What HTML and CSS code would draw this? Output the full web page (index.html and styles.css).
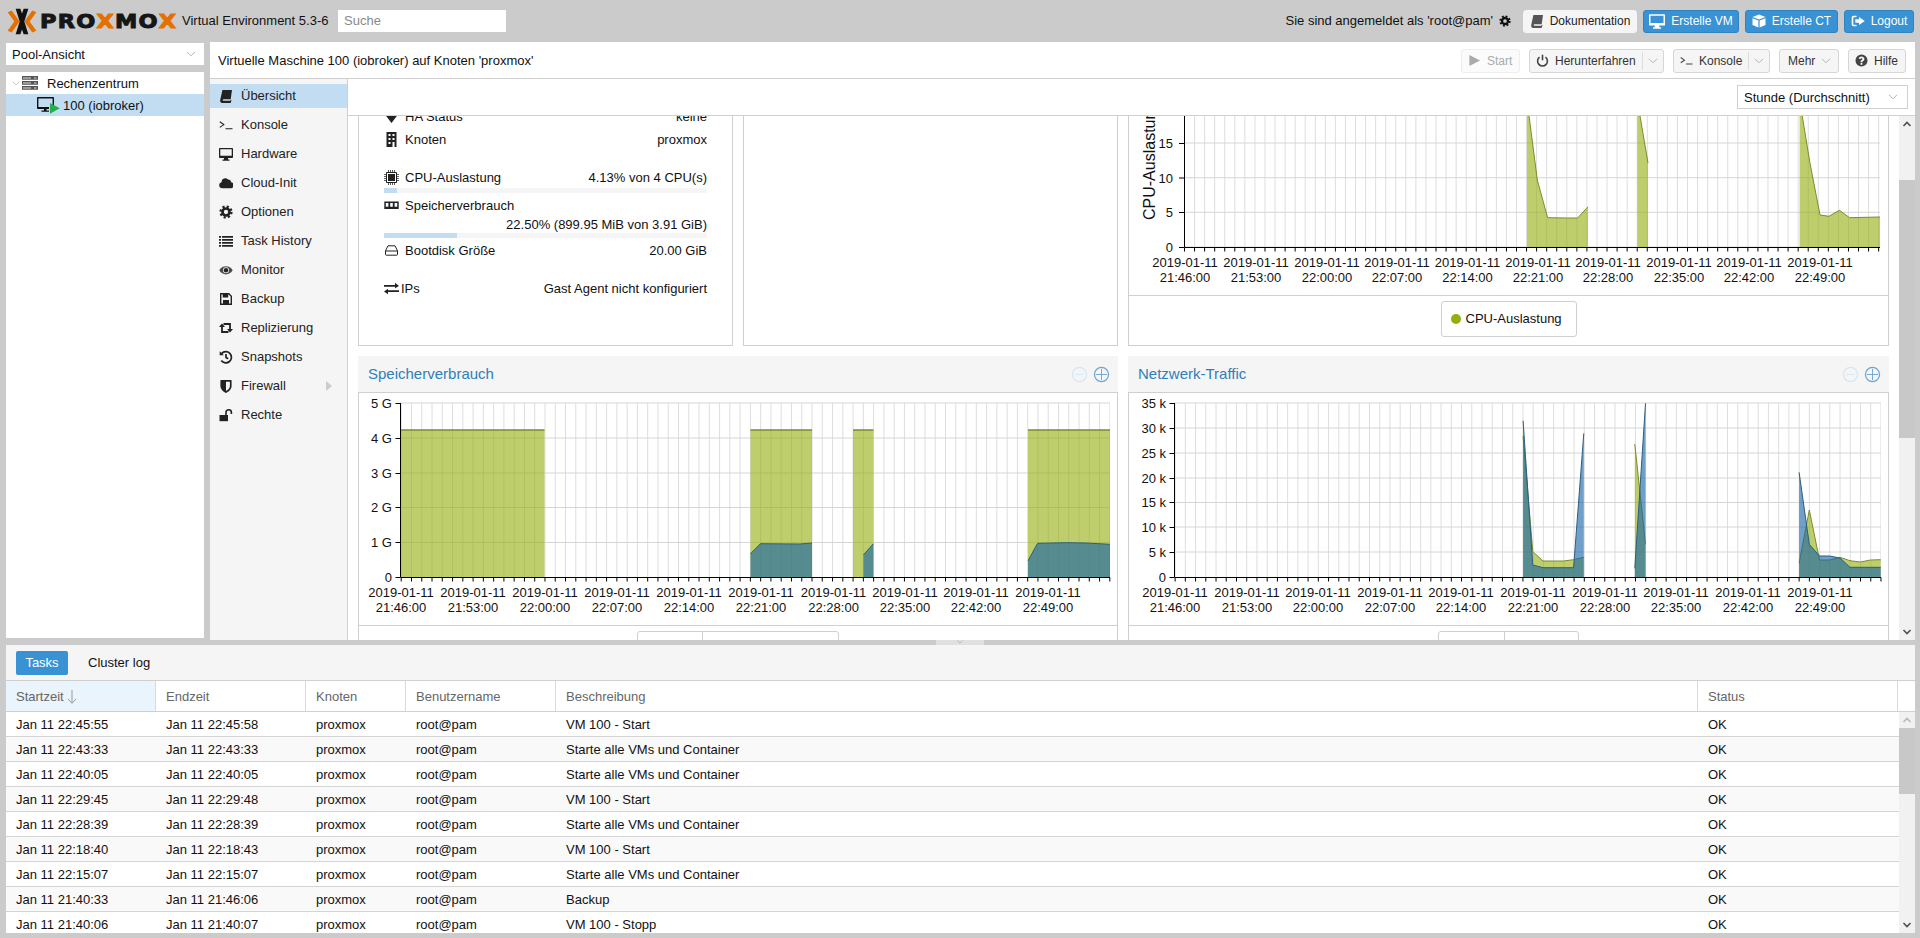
FILE: index.html
```html
<!DOCTYPE html>
<html lang="de">
<head>
<meta charset="utf-8">
<title>proxmox - Proxmox Virtual Environment</title>
<link rel="stylesheet" href="styles.css">
</head>
<body>
<svg class="sprite" aria-hidden="true">
  <symbol id="i-book" viewBox="0 0 14 14"><path fill="currentColor" d="M3.4 1H13l-1.3 9.3H4.6c-1.2 0-1.3 1.4 0 1.4h6.8l.5-1 .6.2-.8 3.1H3.2C1.6 14 .9 12.6 1.2 11L3.4 1Z"/></symbol>
  <symbol id="i-console" viewBox="0 0 14 14"><path fill="none" stroke="currentColor" stroke-width="1.1" d="M.8 3.8 4.8 6.6.8 9.4M6.5 10.8h7"/></symbol>
  <symbol id="i-desktop" viewBox="0 0 14 14"><path fill="currentColor" fill-rule="evenodd" d="M.8 1h12.4c.4 0 .8.4.8.8v8.4c0 .5-.4.8-.8.8H9v1.5h1.5V13.8h-7v-1.3H5V11H.8C.4 11 0 10.700 0 10.200V1.800C0 1.400.4 1 .8 1ZM1.300 2.300V8.700H12.700V2.300Z"/></symbol>
  <symbol id="i-cloud" viewBox="0 0 14 14"><path fill="currentColor" d="M3.300 12.300a3.100 3.100 0 0 1-.8-6.100 3.700 3.700 0 0 1 6.500-2.600 2.600 2.600 0 0 1 3 2.700 3 3 0 0 1-.9 6Z"/></symbol>
  <symbol id="i-gear" viewBox="0 0 14 14"><g fill="none" stroke="currentColor"><circle cx="7" cy="7" r="3.500" stroke-width="2.700"/><circle cx="7" cy="7" r="5.500" stroke-width="2.200" stroke-dasharray="2.200 2.120"/></g></symbol>
  <symbol id="i-list" viewBox="0 0 14 14"><path fill="currentColor" d="M0 2h2v1.700H0ZM3 2h11v1.700H3ZM0 5h2v1.700H0ZM3 5h11v1.700H3ZM0 8h2v1.700H0ZM3 8h11v1.700H3ZM0 11h2v1.700H0ZM3 11h11v1.700H3Z"/></symbol>
  <symbol id="i-eye" viewBox="0 0 14 14"><path fill="currentColor" fill-rule="evenodd" opacity=".8" d="M.3 7.300C3 1.800 11 1.800 13.700 7.300 11 12.800 3 12.800.3 7.300ZM7 4.300A3 3 0 1 0 7 10.300 3 3 0 0 0 7 4.300Z"/><circle cx="7" cy="7.300" r="2.200" fill="currentColor"/></symbol>
  <symbol id="i-floppy" viewBox="0 0 14 14"><path fill="none" stroke="currentColor" stroke-width="1.400" d="M1.700 1.700h8.100l2.500 2.500v8.100H1.700Z"/><path fill="currentColor" d="M3.700 2h5.500v3.500H3.700ZM4 8h6v4.500H4Z"/></symbol>
  <symbol id="i-retweet" viewBox="0 0 14 14"><path fill="none" stroke="currentColor" stroke-width="1.800" d="M3 5.500V11h6.500M11 8.500V3H4.500"/><path fill="currentColor" d="M0 6 3 2.500 6 6ZM8 8l3 3.500L14 8Z"/></symbol>
  <symbol id="i-history" viewBox="0 0 14 14"><path fill="none" stroke="currentColor" stroke-width="1.700" d="M2.600 3.600A5.600 5.600 0 1 1 2.300 10.500M7 4v3.400l2.200 1.300"/><path fill="currentColor" d="M.7 1.300 4.800 5.200H.7Z"/></symbol>
  <symbol id="i-shield" viewBox="0 0 14 14"><path fill="currentColor" fill-rule="evenodd" d="M2 1h10c.3 0 .6.300.6.600V7c0 3.300-2.900 5.800-5.600 7C4.300 12.800 1.400 10.300 1.400 7V1.600C1.400 1.300 1.700 1 2 1ZM7 2.800V12c2-1 3.900-2.800 3.900-5V2.800Z"/></symbol>
  <symbol id="i-unlock" viewBox="0 0 14 14"><path fill="currentColor" d="M.5 7h8.500v6.200H.5Z"/><path fill="none" stroke="currentColor" stroke-width="1.600" d="M7 7.500V4.500a2.700 2.700 0 0 1 5.400 0V6"/></symbol>
  <symbol id="i-cube" viewBox="0 0 14 14"><path fill="currentColor" d="M7 .5 13.500 3 7 5.600.5 3ZM.5 4.200 6.400 6.600v7L.5 11ZM7.600 6.600 13.500 4.200V11L7.600 13.600Z"/></symbol>
  <symbol id="i-signout" viewBox="0 0 14 14"><path fill="none" stroke="currentColor" stroke-width="1.600" d="M5.500 2.500H2.500c-.6 0-1 .4-1 1v7c0 .6.400 1 1 1h3"/><path fill="currentColor" d="M8 3l5.800 4L8 11V8.700H4.300V5.300H8Z"/></symbol>
  <symbol id="i-power" viewBox="0 0 14 14"><path fill="none" stroke="currentColor" stroke-width="1.700" d="M3.800 3.400a5.300 5.300 0 1 0 6.400 0M7 .8v6"/></symbol>
  <symbol id="i-help" viewBox="0 0 14 14"><path fill="currentColor" fill-rule="evenodd" d="M7 .5a6.500 6.500 0 1 1 0 13 6.500 6.500 0 0 1 0-13ZM6 9.800v1.800h2V9.800ZM7 2.800c-1.700 0-2.800.9-3 2.400l1.800.3c.1-.6.500-1 1.100-1 .6 0 1.100.3 1.100.9 0 .5-.4.800-.9 1.100-.9.600-1.100 1.100-1.100 2.400h2c0-.7.200-.9.800-1.300.8-.5 1.300-1.200 1.300-2.200 0-1.600-1.400-2.600-3.100-2.600Z"/></symbol>
  <symbol id="i-play" viewBox="0 0 14 14"><path fill="currentColor" d="M1.500 1 13 7 1.500 13Z"/></symbol>
  <symbol id="i-chev" viewBox="0 0 10 6"><path fill="none" stroke="currentColor" stroke-width="1" d="M1 .8 5 4.800 9 .8"/></symbol>
  <symbol id="i-chevup" viewBox="0 0 10 6"><path fill="none" stroke="currentColor" stroke-width="1.600" d="M1.500 5 5 1.500 8.500 5"/></symbol>
  <symbol id="i-chevdn" viewBox="0 0 10 6"><path fill="none" stroke="currentColor" stroke-width="1.600" d="M1.500 1 5 4.500 8.500 1"/></symbol>
  <symbol id="i-sort" viewBox="0 0 10 14"><path fill="none" stroke="currentColor" stroke-width="1" d="M5 0v13M1 9l4 4.300L9 9"/></symbol>
  <symbol id="i-server" viewBox="0 0 16 14"><path fill="#555" d="M0 0h16v3.800H0ZM0 5h16v3.800H0ZM0 10h16v3.800H0Z"/><path fill="#ddd" d="M1 1.400h8v1H1ZM1 6.400h8v1H1ZM1 11.400h8v1H1ZM12 1.400h2.500v1H12ZM12 6.400h2.500v1H12ZM12 11.400h2.500v1H12Z"/></symbol>
  <symbol id="i-vm" viewBox="0 0 23 17"><path fill="#111" fill-rule="evenodd" d="M.8 0h15.400c.4 0 .8.400.8.800V9h-1.400V1.400H1.400v8.600H12v2H9.500v1.500h2.500v1.300H4.500v-1.300H7V12H.8c-.4 0-.8-.4-.8-.8V.8C0 .4.400 0 .8 0Z"/><path fill="#22b04c" d="M13 6l9.800 5.300L13 16.800Z"/></symbol>
  <symbol id="i-cpu" viewBox="0 0 15 15"><path fill="none" stroke="currentColor" stroke-width="1" d="M2.500 2.500h10v10h-10Z"/><path fill="currentColor" d="M4 4h7v7H4Z"/><path fill="none" stroke="currentColor" stroke-width="1.400" stroke-dasharray="1 1" d="M4 1h7M4 14h7M1 4v7M14 4v7"/></symbol>
  <symbol id="i-mem" viewBox="0 0 15 15"><path fill="currentColor" fill-rule="evenodd" d="M.3 3.500h14.400v7.500H.3ZM1.800 5v3.800h2.600V5ZM6.200 5v3.800h2.600V5ZM10.600 5v3.800h2.600V5Z"/></symbol>
  <symbol id="i-hdd" viewBox="0 0 15 15"><path fill="none" stroke="currentColor" stroke-width="1" d="M4 2.800h7l2.500 5v3.700c0 .4-.3.700-.7.700H2.200c-.4 0-.7-.3-.7-.7V7.800ZM1.500 8h12"/></symbol>
  <symbol id="i-exch" viewBox="0 0 15 15"><path fill="currentColor" d="M0 4h11V1.800L15 5 11 7.200V5.800H0ZM15 9.200H4V7.800L0 10.500 4 13.200V11h11Z"/></symbol>
  <symbol id="i-bldg" viewBox="0 0 15 15"><path fill="currentColor" fill-rule="evenodd" d="M2.500 0h10v15h-10ZM4.500 2v2h2V2ZM8.500 2v2h2V2ZM4.500 6v2h2V6ZM8.500 6v2h2V6ZM4.500 10v2h2v-2ZM8.500 10v5h2V10Z"/></symbol>
  <symbol id="i-ha" viewBox="0 0 15 15"><path fill="currentColor" d="M1 5.500 7.500 14 14 5.500ZM7.500 .5 1 5h13Z"/></symbol>
  <symbol id="i-minus" viewBox="0 0 18 18"><circle cx="9" cy="9" r="7.500" fill="none" stroke="#d5e6f3" stroke-width="1.300"/><path stroke="#d5e6f3" d="M5 9h8"/></symbol>
  <symbol id="i-plus" viewBox="0 0 18 18"><circle cx="9" cy="9" r="7.500" fill="none" stroke="#6ea6d0" stroke-width="1.300"/><path stroke="#6ea6d0" d="M9 3v12M3 9h12"/></symbol>
</svg>

<div class="app">
  <header class="topbar">
    <div class="logo">
      <svg class="logo-x" viewBox="18 22 90 80" aria-hidden="true">
        <path fill="#111" d="M44 24H58L63 38 68 24H82L70 62 82 100H68L63 86 58 100H44L56 62Z"/>
        <path fill="#e57000" d="M20 34 32 29 56 62 32 95 20 90 40 62ZM106 34 94 29 70 62 94 95 106 90 86 62Z"/>
      </svg>
      <span class="logo-text">PRO<b>X</b>MO<b>X</b></span>
    </div>
    <span class="version">Virtual Environment 5.3-6</span>
    <div class="search">Suche</div>
    <div class="top-right">
      <span class="login">Sie sind angemeldet als 'root@pam'</span>
      <svg class="ico gear-top"><use href="#i-gear"/></svg>
      <div class="tbtn tbtn-doc"><svg class="ico"><use href="#i-book"/></svg>Dokumentation</div>
      <div class="tbtn tbtn-vm"><svg class="ico ico-lg"><use href="#i-desktop"/></svg>Erstelle VM</div>
      <div class="tbtn tbtn-ct"><svg class="ico"><use href="#i-cube"/></svg>Erstelle CT</div>
      <div class="tbtn tbtn-out"><svg class="ico"><use href="#i-signout"/></svg>Logout</div>
    </div>
  </header>

  <div class="workspace">
    <aside class="resources">
      <div class="field pool"><span>Pool-Ansicht</span><svg class="chev"><use href="#i-chev"/></svg></div>
      <div class="tree">
        <div class="tree-row"><svg class="chev tree-chev"><use href="#i-chev"/></svg><svg class="tree-server"><use href="#i-server"/></svg><span>Rechenzentrum</span></div>
        <div class="tree-row tree-sel"><svg class="tree-vm"><use href="#i-vm"/></svg><span>100 (iobroker)</span></div>
      </div>
    </aside>

    <section class="center">
      <div class="center-head">
        <span class="center-title">Virtuelle Maschine 100 (iobroker) auf Knoten 'proxmox'</span>
        <div class="actions">
          <div class="btn btn-off btn-start"><svg class="ico"><use href="#i-play"/></svg>Start</div>
          <div class="btn btn-down"><svg class="ico"><use href="#i-power"/></svg><span class="btn-label">Herunterfahren</span><span class="split"><svg class="chev"><use href="#i-chev"/></svg></span></div>
          <div class="btn btn-kons"><svg class="ico"><use href="#i-console"/></svg><span class="btn-label">Konsole</span><span class="split"><svg class="chev"><use href="#i-chev"/></svg></span></div>
          <div class="btn btn-more">Mehr<svg class="chev"><use href="#i-chev"/></svg></div>
          <div class="btn btn-help"><svg class="ico"><use href="#i-help"/></svg>Hilfe</div>
        </div>
      </div>
      <div class="center-main">
        <nav class="sidenav">
          <div class="nav-item nav-sel"><svg class="ico"><use href="#i-book"/></svg>Übersicht</div>
          <div class="nav-item"><svg class="ico"><use href="#i-console"/></svg>Konsole</div>
          <div class="nav-item"><svg class="ico"><use href="#i-desktop"/></svg>Hardware</div>
          <div class="nav-item"><svg class="ico"><use href="#i-cloud"/></svg>Cloud-Init</div>
          <div class="nav-item"><svg class="ico"><use href="#i-gear"/></svg>Optionen</div>
          <div class="nav-item"><svg class="ico"><use href="#i-list"/></svg>Task History</div>
          <div class="nav-item"><svg class="ico"><use href="#i-eye"/></svg>Monitor</div>
          <div class="nav-item"><svg class="ico"><use href="#i-floppy"/></svg>Backup</div>
          <div class="nav-item"><svg class="ico"><use href="#i-retweet"/></svg>Replizierung</div>
          <div class="nav-item"><svg class="ico"><use href="#i-history"/></svg>Snapshots</div>
          <div class="nav-item"><svg class="ico"><use href="#i-shield"/></svg>Firewall<span class="nav-arrow"></span></div>
          <div class="nav-item"><svg class="ico"><use href="#i-unlock"/></svg>Rechte</div>
        </nav>
        <div class="detail">
          <div class="detail-bar">
            <div class="field timeframe"><span>Stunde (Durchschnitt)</span><svg class="chev"><use href="#i-chev"/></svg></div>
          </div>
          <div class="detail-body">
            <div class="pane">
              <div class="dash">
                <div class="card status">
                  <div class="stat stat-first stat-low"><span class="stat-key"><svg class="ico stat-ico"><use href="#i-ha"/></svg>HA Status</span><span>keine</span></div>
                  <div class="stat stat-low"><span class="stat-key"><svg class="ico stat-ico"><use href="#i-bldg"/></svg>Knoten</span><span>proxmox</span></div>
                  <div class="stat stat-cpu stat-low"><span class="stat-key"><svg class="ico stat-ico"><use href="#i-cpu"/></svg>CPU-Auslastung</span><span>4.13% von 4 CPU(s)</span></div>
                  <div class="bar"><div class="bar-fill" style="width:4.13%"></div></div>
                  <div class="stat stat-mem"><span class="stat-key"><svg class="ico stat-ico"><use href="#i-mem"/></svg>Speicherverbrauch</span></div>
                  <div class="stat stat-memval">22.50% (899.95 MiB von 3.91 GiB)</div>
                  <div class="bar"><div class="bar-fill" style="width:22.5%"></div></div>
                  <div class="stat stat-boot"><span class="stat-key"><svg class="ico stat-ico"><use href="#i-hdd"/></svg>Bootdisk Größe</span><span>20.00 GiB</span></div>
                  <div class="stat stat-ip"><span class="stat-key stat-key-ip"><svg class="ico stat-ico"><use href="#i-exch"/></svg>IPs</span><span>Gast Agent nicht konfiguriert</span></div>
                </div>
                <div class="card"></div>
                <div class="card chart-card">
                  <div class="chart-head"><span class="chart-title">CPU-Auslastung</span><svg class="tool"><use href="#i-minus"/></svg><svg class="tool"><use href="#i-plus"/></svg></div>
                  <svg class="chart" viewBox="1129 63 759 232">
                    <line class="grid-v" x1="1184" y1="100" x2="1880" y2="100" stroke-width="294" stroke-dasharray="1 9.060"/>
                    <path class="grid-h" d="M1184 247H1880M1184 212.300H1880M1184 177.700H1880M1184 143H1880M1184 108.300H1880"/>
                    <path class="s-green" d="M1527 247V100L1537.300 180 1547.600 217.700 1567.400 218 1577.600 218 1588 206.700V247ZM1637.300 247V100L1648 163V247ZM1799.600 247V100L1810 163.300 1820 215 1829 216.300 1839.400 210.300 1849.600 217.700 1880 217V247Z"/>
                    <path class="l-green" d="M1527 100 1537.300 180 1547.600 217.700 1567.400 218 1577.600 218 1588 206.700M1637.300 100 1648 163M1799.600 100 1810 163.300 1820 215 1829 216.300 1839.400 210.300 1849.600 217.700 1880 217"/>
                    <path class="axis" d="M1184.500 90V247.500H1880M1179 247.500H1184M1179 212.500H1184M1179 178H1184M1179 143.500H1184"/>
                    <line class="axis" x1="1184" y1="249.500" x2="1881" y2="249.500" stroke-width="4" stroke-dasharray="1 9.060"/>
                    <text class="ylab" x="1173" y="252">0</text><text class="ylab" x="1173" y="217">5</text><text class="ylab" x="1173" y="183">10</text><text class="ylab" x="1173" y="148">15</text>
                    <text class="ytitle" transform="translate(1155 220) rotate(-90)">CPU-Auslastung</text>
                    <g class="xlab">
                      <text x="1185" y="267">2019-01-11<tspan x="1185" y="282">21:46:00</tspan></text>
                      <text x="1256" y="267">2019-01-11<tspan x="1256" y="282">21:53:00</tspan></text>
                      <text x="1327" y="267">2019-01-11<tspan x="1327" y="282">22:00:00</tspan></text>
                      <text x="1397" y="267">2019-01-11<tspan x="1397" y="282">22:07:00</tspan></text>
                      <text x="1467.500" y="267">2019-01-11<tspan x="1467.500" y="282">22:14:00</tspan></text>
                      <text x="1538" y="267">2019-01-11<tspan x="1538" y="282">22:21:00</tspan></text>
                      <text x="1608" y="267">2019-01-11<tspan x="1608" y="282">22:28:00</tspan></text>
                      <text x="1679" y="267">2019-01-11<tspan x="1679" y="282">22:35:00</tspan></text>
                      <text x="1749" y="267">2019-01-11<tspan x="1749" y="282">22:42:00</tspan></text>
                      <text x="1820" y="267">2019-01-11<tspan x="1820" y="282">22:49:00</tspan></text>
                    </g>
                  </svg>
                  <div class="legend-row"><div class="legend"><div class="legend-item"><span class="dot"></span>CPU-Auslastung</div></div></div>
                </div>

                <div class="card chart-card wide-a">
                  <div class="chart-head"><span class="chart-title">Speicherverbrauch</span><svg class="tool"><use href="#i-minus"/></svg><svg class="tool"><use href="#i-plus"/></svg></div>
                  <svg class="chart chart-a" viewBox="359 393 758 232">
                    <line class="grid-v" x1="400.700" y1="490" x2="1110" y2="490" stroke-width="174" stroke-dasharray="1 9.270"/>
                    <path class="grid-h" d="M400 403H1110M400 438H1110M400 473H1110M400 507.500H1110M400 542.500H1110"/>
                    <path class="s-green" d="M400.700 577V430H544.500V577ZM750.500 577V430H812V577ZM853 577V430H873.400V577ZM1028 577V430H1110V577Z"/>
                    <path class="l-green l-thick" d="M400.700 430H544.500M750.500 430H812M853 430H873.400M1028 430H1110"/>
                    <path class="s-blue" d="M750.500 577V553.700L760.400 543.700 800 544 812 543V577ZM863.400 577V555L873.400 543.700V577ZM1028 577V560.700L1037.600 543.300 1066 542.700 1086 543 1110 544.300V577Z"/>
                    <path class="l-blue" d="M750.500 553.700 760.400 543.700 800 544 812 543M863.400 555 873.400 543.700M1028 560.700 1037.600 543.300 1066 542.700 1086 543 1110 544.300"/>
                    <path class="axis" d="M400.500 403V577.500H1110M395.500 403.500H400M395.500 438.500H400M395.500 473.500H400M395.500 507.500H400M395.500 542.500H400M395.500 577.500H400"/>
                    <line class="axis" x1="400.700" y1="579.500" x2="1111" y2="579.500" stroke-width="4" stroke-dasharray="1 9.270"/>
                    <text class="ylab" x="392" y="408">5 G</text><text class="ylab" x="392" y="443">4 G</text><text class="ylab" x="392" y="478">3 G</text><text class="ylab" x="392" y="512">2 G</text><text class="ylab" x="392" y="547">1 G</text><text class="ylab" x="392" y="582">0</text>
                    <g class="xlab">
                      <text x="401" y="597">2019-01-11<tspan x="401" y="612">21:46:00</tspan></text>
                      <text x="473" y="597">2019-01-11<tspan x="473" y="612">21:53:00</tspan></text>
                      <text x="545" y="597">2019-01-11<tspan x="545" y="612">22:00:00</tspan></text>
                      <text x="617" y="597">2019-01-11<tspan x="617" y="612">22:07:00</tspan></text>
                      <text x="689" y="597">2019-01-11<tspan x="689" y="612">22:14:00</tspan></text>
                      <text x="761" y="597">2019-01-11<tspan x="761" y="612">22:21:00</tspan></text>
                      <text x="833.600" y="597">2019-01-11<tspan x="833.600" y="612">22:28:00</tspan></text>
                      <text x="905" y="597">2019-01-11<tspan x="905" y="612">22:35:00</tspan></text>
                      <text x="976" y="597">2019-01-11<tspan x="976" y="612">22:42:00</tspan></text>
                      <text x="1048" y="597">2019-01-11<tspan x="1048" y="612">22:49:00</tspan></text>
                    </g>
                  </svg>
                  <div class="legend-row"><div class="legend"><div class="legend-item legend-a1"><span class="dot"></span>Gesamt</div><div class="legend-item legend-a2"><span class="dot dot-blue"></span>Speicherverbrauch</div></div></div>
                </div>

                <div class="card chart-card">
                  <div class="chart-head"><span class="chart-title">Netzwerk-Traffic</span><svg class="tool"><use href="#i-minus"/></svg><svg class="tool"><use href="#i-plus"/></svg></div>
                  <svg class="chart" viewBox="1129 393 759 232">
                    <line class="grid-v" x1="1174.600" y1="490" x2="1881" y2="490" stroke-width="174" stroke-dasharray="1 9.230"/>
                    <path class="grid-h" d="M1174 403H1881M1174 428H1881M1174 453H1881M1174 478H1881M1174 502.500H1881M1174 527H1881M1174 552H1881"/>
                    <path class="s-green" d="M1523.100 577V436L1532.800 551.700 1543 561 1563.400 561 1573.600 559.700 1583.800 557.300V577ZM1634.800 577V444L1645.500 544.300V577ZM1799.100 577V563.300L1809.300 510 1819.500 560 1829.700 560 1840 557.300 1850 560.700 1860.300 562 1870.500 560 1880.700 559.700V577Z"/>
                    <path class="l-green" d="M1523.100 436 1532.800 551.700 1543 561 1563.400 561 1573.600 559.700 1583.800 557.300M1634.800 444 1645.500 544.300M1799.100 563.300 1809.300 510 1819.500 560 1829.700 560 1840 557.300 1850 560.700 1860.300 562 1870.500 560 1880.700 559.700"/>
                    <path class="s-blue" d="M1523.100 577V420.700L1532.800 565 1543 567.700 1573.600 567.700 1583.800 433.300V577ZM1634.800 577V568.300L1645.500 403.300V577ZM1799.100 577V472.300L1809.300 544.300 1819.500 556 1829.700 556 1840 558 1850 567.300 1880.700 567.300V577Z"/>
                    <path class="l-blue" d="M1523.100 420.700 1532.800 565 1543 567.700 1573.600 567.700 1583.800 433.300M1634.800 568.300 1645.500 403.300M1799.100 472.300 1809.300 544.300 1819.500 556 1829.700 556 1840 558 1850 567.300 1880.700 567.300"/>
                    <path class="axis" d="M1174.500 403V577.500H1881M1169.500 403.500H1174M1169.500 428.500H1174M1169.500 453.500H1174M1169.500 478.500H1174M1169.500 502.500H1174M1169.500 527.500H1174M1169.500 552.500H1174M1169.500 577.500H1174"/>
                    <line class="axis" x1="1174.600" y1="579.500" x2="1882" y2="579.500" stroke-width="4" stroke-dasharray="1 9.230"/>
                    <text class="ylab" x="1166" y="408">35 k</text><text class="ylab" x="1166" y="433">30 k</text><text class="ylab" x="1166" y="458">25 k</text><text class="ylab" x="1166" y="483">20 k</text><text class="ylab" x="1166" y="507">15 k</text><text class="ylab" x="1166" y="532">10 k</text><text class="ylab" x="1166" y="557">5 k</text><text class="ylab" x="1166" y="582">0</text>
                    <g class="xlab">
                      <text x="1175" y="597">2019-01-11<tspan x="1175" y="612">21:46:00</tspan></text>
                      <text x="1247" y="597">2019-01-11<tspan x="1247" y="612">21:53:00</tspan></text>
                      <text x="1318" y="597">2019-01-11<tspan x="1318" y="612">22:00:00</tspan></text>
                      <text x="1390" y="597">2019-01-11<tspan x="1390" y="612">22:07:00</tspan></text>
                      <text x="1461" y="597">2019-01-11<tspan x="1461" y="612">22:14:00</tspan></text>
                      <text x="1533" y="597">2019-01-11<tspan x="1533" y="612">22:21:00</tspan></text>
                      <text x="1605" y="597">2019-01-11<tspan x="1605" y="612">22:28:00</tspan></text>
                      <text x="1676" y="597">2019-01-11<tspan x="1676" y="612">22:35:00</tspan></text>
                      <text x="1748" y="597">2019-01-11<tspan x="1748" y="612">22:42:00</tspan></text>
                      <text x="1820" y="597">2019-01-11<tspan x="1820" y="612">22:49:00</tspan></text>
                    </g>
                  </svg>
                  <div class="legend-row"><div class="legend"><div class="legend-item legend-b1"><span class="dot"></span>netin</div><div class="legend-item legend-b2"><span class="dot dot-blue"></span>netout</div></div></div>
                </div>
              </div>
            </div>
            <div class="scroll scroll-main">
              <svg class="scroll-arrow"><use href="#i-chevup"/></svg>
              <div class="thumb thumb-main"></div>
              <svg class="scroll-arrow scroll-end"><use href="#i-chevdn"/></svg>
            </div>
          </div>
        </div>
      </div>
    </section>
  </div>

  <div class="splitter"><span class="split-tab"><svg class="split-chev"><use href="#i-chev"/></svg></span></div>

  <section class="logs">
    <div class="log-tabs"><div class="tab tab-on">Tasks</div><div class="tab">Cluster log</div></div>
    <div class="log-head">
      <div class="cols">
        <div class="th th-sorted">Startzeit<svg class="sort"><use href="#i-sort"/></svg></div><div class="th">Endzeit</div><div class="th">Knoten</div><div class="th">Benutzername</div><div class="th">Beschreibung</div><div class="th">Status</div>
      </div>
      <div class="th-fill"></div>
    </div>
    <div class="log-body">
      <div class="rows">
        <div class="cols row"><div>Jan 11 22:45:55</div><div>Jan 11 22:45:58</div><div>proxmox</div><div>root@pam</div><div>VM 100 - Start</div><div>OK</div></div>
        <div class="cols row"><div>Jan 11 22:43:33</div><div>Jan 11 22:43:33</div><div>proxmox</div><div>root@pam</div><div>Starte alle VMs und Container</div><div>OK</div></div>
        <div class="cols row"><div>Jan 11 22:40:05</div><div>Jan 11 22:40:05</div><div>proxmox</div><div>root@pam</div><div>Starte alle VMs und Container</div><div>OK</div></div>
        <div class="cols row"><div>Jan 11 22:29:45</div><div>Jan 11 22:29:48</div><div>proxmox</div><div>root@pam</div><div>VM 100 - Start</div><div>OK</div></div>
        <div class="cols row"><div>Jan 11 22:28:39</div><div>Jan 11 22:28:39</div><div>proxmox</div><div>root@pam</div><div>Starte alle VMs und Container</div><div>OK</div></div>
        <div class="cols row"><div>Jan 11 22:18:40</div><div>Jan 11 22:18:43</div><div>proxmox</div><div>root@pam</div><div>VM 100 - Start</div><div>OK</div></div>
        <div class="cols row"><div>Jan 11 22:15:07</div><div>Jan 11 22:15:07</div><div>proxmox</div><div>root@pam</div><div>Starte alle VMs und Container</div><div>OK</div></div>
        <div class="cols row"><div>Jan 11 21:40:33</div><div>Jan 11 21:46:06</div><div>proxmox</div><div>root@pam</div><div>Backup</div><div>OK</div></div>
        <div class="cols row"><div>Jan 11 21:40:06</div><div>Jan 11 21:40:07</div><div>proxmox</div><div>root@pam</div><div>VM 100 - Stopp</div><div>OK</div></div>
      </div>
      <div class="scroll scroll-log">
        <svg class="scroll-arrow scroll-arrow-dim"><use href="#i-chevup"/></svg>
        <div class="thumb thumb-log"></div>
        <svg class="scroll-arrow scroll-end"><use href="#i-chevdn"/></svg>
      </div>
    </div>
  </section>
</div>
</body>
</html>
```

FILE: styles.css
```css
* { box-sizing: border-box; }
html, body { margin: 0; height: 100%; overflow: hidden; }
body { font: 13px/16px "Liberation Sans", Arial, sans-serif; color: #111; background: #cbcbcb; }
.sprite { position: absolute; width: 0; height: 0; }
.app { width: 1920px; height: 938px; padding: 0 5px 0 6px; overflow: hidden; }
.ico { width: 14px; height: 14px; flex: none; display: block; color: inherit; }
.chev { width: 10px; height: 6px; flex: none; color: #b5b5b5; display: block; }

/* top bar */
.topbar { height: 42px; display: flex; align-items: center; }
.logo { display: flex; align-items: center; width: 176px; padding-left: 1px; flex: none; }
.logo-x { width: 30px; height: 27px; flex: none; }
.logo-text { font: bold 20px/20px "DejaVu Sans", sans-serif; letter-spacing: 1.1px; color: #161616; margin-left: 3px; -webkit-text-stroke: 1px #161616; transform: scaleX(1.12); transform-origin: left center; white-space: nowrap; }
.logo-text b { color: #e57000; -webkit-text-stroke: 1px #e57000; }
.version { width: 156px; flex: none; }
.search { width: 168px; height: 22px; background: #fff; color: #888; padding: 3px 6px; flex: none; }
.top-right { margin-left: auto; margin-right: 1px; display: flex; align-items: center; }
.login { margin-right: 6px; }
.gear-top { width: 12px; height: 12px; margin-right: 12px; color: #111; }
.tbtn { height: 23px; border-radius: 3px; display: flex; align-items: center; justify-content: center; gap: 6px; color: #fff; background: #3892d4; border: 1px solid #3183bf; margin-left: 6px; font-size: 12px; }
.tbtn-doc { margin-left: 0; background: #f5f5f5; border-color: #f5f5f5; color: #222; width: 114px; }
.tbtn-doc .ico { color: #555; }
.tbtn-vm { width: 96px; }
.tbtn-ct { width: 93px; }
.tbtn-out { width: 70px; }
.ico-lg { width: 16px; height: 16px; }

/* workspace */
.workspace { height: 598px; display: flex; }
.resources { width: 198px; flex: none; }
.field { background: #fff; display: flex; align-items: center; justify-content: space-between; }
.field span { margin-top: 1px; }
.pool { height: 22px; margin-top: 1px; padding: 0 8px 0 6px; }
.tree { height: 566px; margin-top: 7px; background: #fff; }
.tree-row { height: 22px; display: flex; align-items: center; padding-left: 6px; }
.tree-row span { margin-top: 2px; }
.tree-sel { background: #c2ddf2; padding-left: 31px; }
.tree-chev { width: 8px; height: 5px; margin-right: 2px; }
.tree-server { width: 16px; height: 14px; flex: none; margin-right: 9px; }
.tree-vm { width: 23px; height: 17px; flex: none; margin-right: 3px; }

.center { width: 1705px; margin-left: 6px; display: flex; flex-direction: column; }
.center-head { height: 37px; background: #fff; border-bottom: 1px solid #cfcfcf; display: flex; align-items: center; padding: 0 9px 0 8px; }
.center-title { flex: 1; padding-top: 2px; }
.actions { display: flex; gap: 9px; margin-top: 1px; }
.btn { height: 24px; border: 1px solid #d6d6d6; border-radius: 3px; background: #f5f5f5; color: #333; display: flex; align-items: center; padding: 0 6px; gap: 6px; font-size: 12px; }
.btn .ico { width: 13px; height: 13px; color: #444; }
.btn-off { color: #aaa; border-color: #eee; background: #fbfbfb; }
.btn-off .ico { color: #aaa; }
.btn-start { width: 59px; }
.btn-down { width: 135px; }
.btn-kons { width: 97px; }
.btn-more { width: 60px; justify-content: space-between; padding: 0 8px 0 8px; }
.btn-help { width: 58px; }
.btn-label { flex: 1; white-space: nowrap; }
.split { align-self: stretch; width: 22px; margin: 2px -6px 2px 0; border-left: 1px solid #ddd; display: flex; align-items: center; justify-content: center; }

.center-main { flex: 1; display: flex; min-height: 0; }
.sidenav { width: 138px; flex: none; background: #f5f5f5; border-right: 1px solid #cfcfcf; padding-top: 5px; }
.nav-item { height: 24px; margin-bottom: 5px; display: flex; align-items: center; padding-left: 9px; gap: 8px; position: relative; color: #222; }
.nav-sel { background: #c2ddf2; }
.nav-arrow { position: absolute; right: 15px; top: 7px; border-left: 6px solid #ccc; border-top: 5px solid transparent; border-bottom: 5px solid transparent; }
.detail { flex: 1; min-width: 0; display: flex; flex-direction: column; }
.detail-bar { height: 37px; background: #fff; border-bottom: 1px solid #cfcfcf; display: flex; justify-content: flex-end; align-items: flex-start; padding: 6px 7px 0 0; flex: none; }
.timeframe { width: 171px; height: 24px; border: 1px solid #cfcfcf; padding: 0 9px 0 6px; }
.detail-body { flex: 1; display: flex; min-height: 0; background: #fff; }
.pane { flex: 1; min-width: 0; overflow: hidden; }
.dash { margin-top: -90px; padding-left: 10px; display: grid; grid-template-columns: 375px 375px 761px; grid-template-rows: 320px 320px; gap: 10px; }
.card { border: 1px solid #cfcfcf; background: #fff; min-width: 0; }
.wide-a { grid-column: span 2; }

/* status */
.status { padding: 0 25px; }
.stat { height: 23px; line-height: 23px; display: flex; justify-content: space-between; white-space: nowrap; }
.stat-low { padding-top: 1px; }
.stat-first { margin-top: 77px; }
.stat-key { display: flex; align-items: center; gap: 6px; }
.stat-ico { width: 15px; height: 15px; color: #222; }
.stat-cpu { margin-top: 15px; }
.stat-mem { margin-top: 1px; height: 22px; }
.stat-memval { justify-content: flex-end; height: 17px; line-height: 17px; }
.stat-boot { margin-top: 1px; }
.stat-ip { margin-top: 15px; }
.stat-key-ip { gap: 2px; }
.bar { height: 5px; background: #f5f5f5; }
.bar-fill { height: 100%; background: #c2ddf2; }

/* charts */
.chart-card { display: flex; flex-direction: column; border: 0; box-shadow: inset 1px 0 #cfcfcf, inset -1px 0 #cfcfcf, inset 0 -1px #cfcfcf; }
.chart-head { height: 37px; flex: none; background: #f5f5f5; border-bottom: 1px solid #cfcfcf; display: flex; align-items: center; padding: 0 8px 0 10px; gap: 5px; }
.chart-title { flex: 1; font-size: 15px; color: #2f7fb8; }
.tool { width: 17px; height: 17px; flex: none; }
.chart { display: block; width: 759px; height: 232px; flex: none; margin: 0 1px; }
.chart-a { width: 758px; }
.grid-v { stroke: #dedede; fill: none; }
.grid-h { stroke: #d6d6d6; stroke-width: 1; fill: none; }
.axis { stroke: #000; stroke-width: 1; fill: none; }
line.axis { stroke-width: 4; }
.s-green { fill: #94ae0a; fill-opacity: .6; }
.s-blue { fill: #115fa6; fill-opacity: .6; }
.l-green { fill: none; stroke: #7a8d2c; stroke-width: 1; }
.l-thick { stroke-width: 1.500; }
.l-blue { fill: none; stroke: #2c5f7f; stroke-width: 1; }
.ylab { font: 13px "Liberation Sans", Arial, sans-serif; fill: #111; text-anchor: end; }
.ytitle { font: 16px "Liberation Sans", Arial, sans-serif; fill: #111; }
.xlab { font: 13px "Liberation Sans", Arial, sans-serif; fill: #111; text-anchor: middle; }
.legend-row { border-top: 1px solid #cfcfcf; height: 51px; display: flex; justify-content: center; padding-top: 5px; flex: none; }
.legend { height: 36px; border: 1px solid #cfcfcf; border-radius: 3px; display: flex; }
.legend-item { display: flex; align-items: center; padding-left: 9px; white-space: nowrap; gap: 5px; width: 134px; }
.dot { width: 10px; height: 10px; border-radius: 50%; background: #94ae0a; flex: none; }
.dot-blue { background: #115fa6; }
.legend-a1 { width: 65px; border-right: 1px solid #cfcfcf; }
.legend-a2 { width: 135px; }
.legend-b1 { width: 66px; border-right: 1px solid #cfcfcf; }
.legend-b2 { width: 73px; }

/* scrollbars */
.scroll { width: 16px; flex: none; background: #f1f1f1; display: flex; flex-direction: column; align-items: center; }
.scroll-arrow { width: 16px; height: 6px; margin: 5px 0; flex: none; color: #505050; display: block; }
.scroll-arrow-dim { color: #b8b8b8; }
.scroll-end { margin-top: auto; }
.thumb { width: 16px; background: #c8c8c8; flex: none; }
.thumb-main { height: 258px; margin-top: 48px; }
.thumb-log { height: 66px; }

/* splitter */
.splitter { height: 5px; position: relative; }
.split-tab { position: absolute; left: 930px; top: 0; width: 48px; height: 5px; background: #e0e0e0; display: flex; justify-content: center; }
.split-chev { width: 10px; height: 4px; color: #aaa; }

/* log */
.logs { height: 288px; background: #fff; display: flex; flex-direction: column; overflow: hidden; }
.log-tabs { height: 36px; background: #f5f5f5; border-bottom: 1px solid #cfcfcf; display: flex; align-items: center; padding: 0 0 0 10px; gap: 10px; flex: none; }
.tab { height: 24px; line-height: 24px; padding: 0 10px; border-radius: 2px; color: #111; }
.tab-on { background: #3892d4; color: #fff; width: 52px; padding: 0; text-align: center; }
.log-head { height: 31px; display: flex; border-bottom: 1px solid #cfcfcf; flex: none; }
.cols { display: grid; grid-template-columns: 150px 150px 100px 150px 1142px 1fr; flex: 1; }
.th { border-right: 1px solid #d9d9d9; padding: 0 10px; line-height: 32px; height: 30px; color: #666; display: flex; align-items: flex-start; }
.th-sorted { background: #eaf4fc; }
.sort { width: 10px; height: 14px; margin: 9px 0 0 3px; color: #999; flex: none; }
.th-fill { width: 17px; flex: none; }
.log-body { flex: 1; display: flex; min-height: 0; }
.rows { flex: 1; min-width: 0; overflow: hidden; }
.row { height: 25px; line-height: 26px; border-bottom: 1px solid #d4d4d4; }
.row:nth-child(even) { background: #f9f9f9; }
.row > div { padding: 0 10px; white-space: nowrap; overflow: hidden; height: 24px; }
```
